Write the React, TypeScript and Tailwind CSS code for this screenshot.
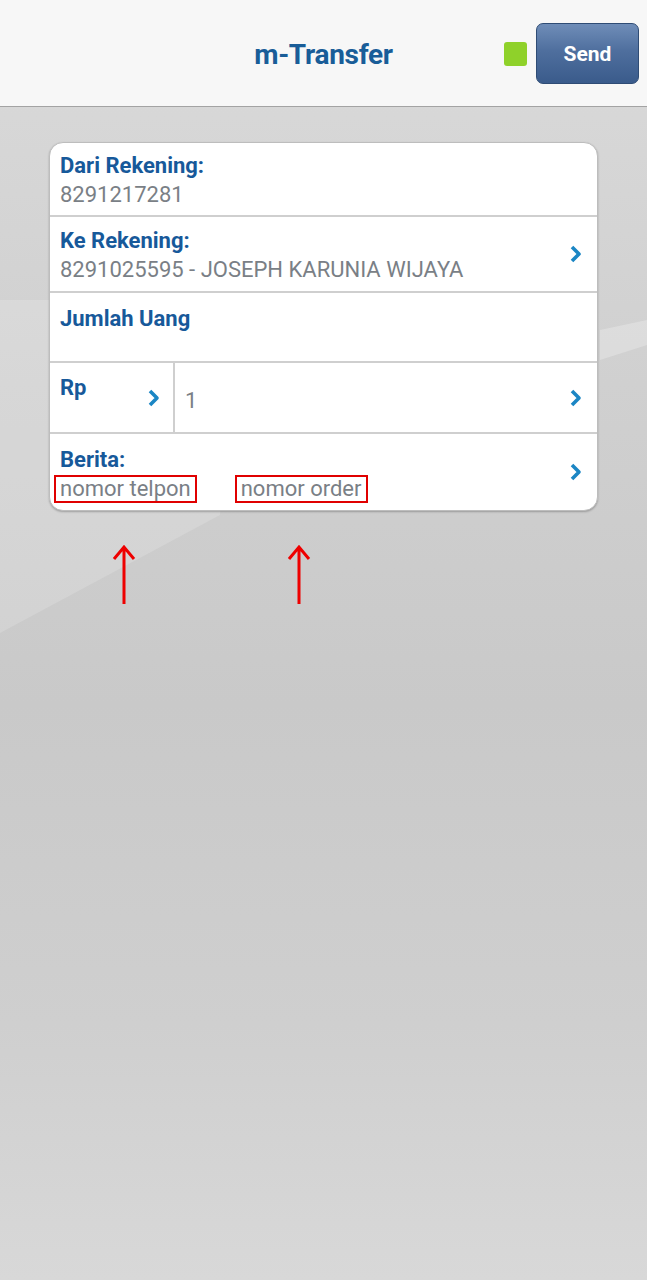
function Chevron() {
  return (
    <svg width="14" height="18" viewBox="0 0 14 18" className="shrink-0">
      <path d="M3 2 L10 9 L3 16" fill="none" stroke="#1b86c4" strokeWidth="3.6" strokeLinejoin="round" />
    </svg>
  );
}

function UpArrow() {
  return (
    <svg width="24" height="62" viewBox="0 0 24 62">
      <path d="M12 60 V3 M2 15 L12 3 L22 15" fill="none" stroke="#ee0000" strokeWidth="3" />
    </svg>
  );
}

export default function App() {
  return (
    <div
      className="relative w-[647px] h-[1280px] overflow-hidden bg-[linear-gradient(180deg,#dadada_0%,#d0d0d0_30%,#c9c9c9_55%,#cfcfcf_80%,#d8d8d8_100%)]"
      style={{ fontFamily: "Roboto, 'Noto Sans', sans-serif" }}
    >
      {/* background sheen */}
      <svg className="absolute left-0 top-0" width="647" height="1280" viewBox="0 0 647 1280">
        <polygon points="0,300 240,300 220,515 0,633" fill="#ffffff" opacity="0.16" />
        <polygon points="600,330 647,320 647,345 600,360" fill="#ffffff" opacity="0.25" />
      </svg>

      <div className="relative">
        {/* header */}
        <div className="h-[107px] bg-[#f7f7f7] border-b border-[#a3a3a3] flex items-center relative">
          <div className="flex-1 text-center pt-[4px] text-[28px] font-bold text-[#195d98] tracking-[-0.3px]">m-Transfer</div>
          <div className="absolute right-[8px] top-[23px] flex items-center gap-[9px]">
            <div className="w-[23px] h-[24px] rounded-[3px] bg-[#8fd12a]" />
            <div className="w-[103px] h-[61px] pt-[3px] rounded-[7px] border border-[#2f4c75] bg-[linear-gradient(180deg,#6f8db8_0%,#4f6f9e_45%,#3a5b8b_100%)] flex items-center justify-center text-white text-[21px] font-bold">
              Send
            </div>
          </div>
        </div>

        {/* card */}
        <div className="mx-[49px] mt-[35px] bg-white rounded-[14px] border border-[#bdbdbd] shadow-[0_1px_2px_rgba(0,0,0,0.25)] overflow-hidden">
          <div className="h-[74px] px-[10px] pt-[9px] border-b-2 border-[#cfcfcf]">
            <div className="text-[22px] font-bold text-[#17599a] leading-[27px]">Dari Rekening:</div>
            <div className="text-[22px] text-[#7a7f86] leading-[31px]">8291217281</div>
          </div>
          <div className="h-[76px] pl-[10px] pr-[14px] border-b-2 border-[#cfcfcf] flex items-center">
            <div className="flex-1 pt-[4px]">
              <div className="text-[22px] font-bold text-[#17599a] leading-[27px]">Ke Rekening:</div>
              <div className="text-[22px] text-[#7a7f86] leading-[32px]">8291025595 - JOSEPH KARUNIA WIJAYA</div>
            </div>
            <Chevron />
          </div>
          <div className="h-[70px] px-[10px] pt-[12px] border-b-2 border-[#cfcfcf]">
            <div className="text-[22px] font-bold text-[#17599a] leading-[27px]">Jumlah Uang</div>
          </div>
          <div className="h-[71px] flex border-b-2 border-[#cfcfcf]">
            <div className="w-[125px] border-r-2 border-[#cfcfcf] pl-[10px] pr-[12px] flex">
              <div className="flex-1 pt-[11px] text-[22px] font-bold text-[#17599a] leading-[27px]">Rp</div>
              <div className="flex items-center"><Chevron /></div>
            </div>
            <div className="flex-1 flex items-center pl-[10px] pr-[14px]">
              <div className="flex-1 text-[22px] text-[#7a7f86] pt-[6px]">1</div>
              <Chevron />
            </div>
          </div>
          <div className="h-[76px] pl-[4px] pr-[14px] flex items-center">
            <div className="flex-1 pt-[4px]">
              <div className="pl-[6px] text-[22px] font-bold text-[#17599a] leading-[27px]">Berita:</div>
              <div className="flex items-center gap-[38px] mt-[2px]">
                <div className="border-2 border-[#e00000] px-[4px] h-[28px] flex items-center text-[22px] text-[#7a7f86]">nomor telpon</div>
                <div className="border-2 border-[#e00000] px-[4px] h-[28px] flex items-center text-[22px] text-[#7a7f86]">nomor order</div>
              </div>
            </div>
            <Chevron />
          </div>
        </div>

        {/* arrows */}
        <div className="flex mt-[33px] pl-[112px] gap-[151px]">
          <UpArrow />
          <UpArrow />
        </div>
      </div>
    </div>
  );
}
